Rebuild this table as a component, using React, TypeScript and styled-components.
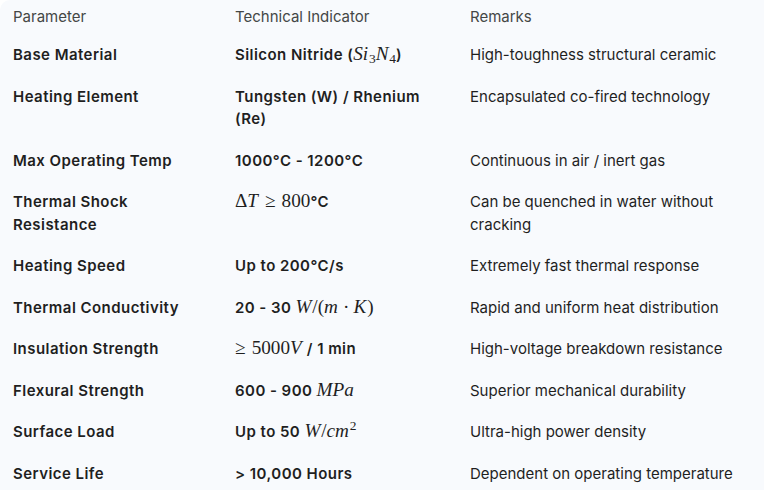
import React from "react";
import styled, { createGlobalStyle } from "styled-components";

const Global = createGlobalStyle`
  html, body { margin: 0; padding: 0; background: #ffffff; overflow: hidden; }
  body { font-family: Inter, "Noto Sans", sans-serif; }
`;

const Wrapper = styled.div`
  background: #f8fafd;
  border-top-left-radius: 10px;
  width: 764px;
  height: 490px;
  box-sizing: border-box;
  padding-left: 13px;
`;

const Grid = styled.div`
  display: grid;
  grid-template-columns: 222px 235px 1fr;
`;

const Cell = styled.div<{ $col: number; $head?: boolean }>`
  box-sizing: border-box;
  padding: ${(p) => (p.$head ? "6px" : "9.5px")} ${(p) => (p.$col === 2 ? "16px" : "40px")}
    ${(p) => (p.$head ? "6px" : "9.5px")} 0;
  font-size: 15px;
  line-height: 22.5px;
  font-weight: ${(p) => (p.$head || p.$col === 2 ? 400 : 600)};
  letter-spacing: ${(p) => (p.$head || p.$col === 2 ? "0" : "0.45px")};
  color: ${(p) => (p.$head ? "#444746" : "#1f1f1f")};
`;

const Math = styled.span`
  font-family: "Liberation Serif", "DejaVu Serif", serif;
  font-size: 1.28em;
  font-weight: 400;
  letter-spacing: 0;
  line-height: 0;
  white-space: nowrap;
`;

const V = styled.i`
  font-style: italic;
  padding-right: 0.04em;
`;

const Rel = styled.span`
  margin: 0 0.32em;
`;

const Bin = styled.span`
  margin: 0 0.22em;
`;

const Sub = styled.span`
  font-size: 0.7em;
  vertical-align: -0.25em;
  font-style: normal;
`;

const Sup = styled.span`
  font-size: 0.7em;
  vertical-align: 0.5em;
  font-style: normal;
`;

type Row = { p: React.ReactNode; t: React.ReactNode; r: React.ReactNode };

const rows: Row[] = [
  {
    p: "Base Material",
    t: (
      <>
        Silicon Nitride (
        <Math>
          <V>Si</V>
          <Sub>3</Sub>
          <V>N</V>
          <Sub>4</Sub>
        </Math>
        )
      </>
    ),
    r: "High-toughness structural ceramic",
  },
  { p: "Heating Element", t: "Tungsten (W) / Rhenium (Re)", r: "Encapsulated co-fired technology" },
  { p: "Max Operating Temp", t: "1000°C - 1200°C", r: "Continuous in air / inert gas" },
  {
    p: "Thermal Shock Resistance",
    t: (
      <>
        <Math>
          Δ<V>T</V>
          <Rel>≥</Rel>800
        </Math>
        °C
      </>
    ),
    r: "Can be quenched in water without cracking",
  },
  { p: "Heating Speed", t: "Up to 200°C/s", r: "Extremely fast thermal response" },
  {
    p: "Thermal Conductivity",
    t: (
      <>
        20 - 30{" "}
        <Math>
          <V>W</V>/(<V>m</V>
          <Bin>·</Bin>
          <V>K</V>)
        </Math>
      </>
    ),
    r: "Rapid and uniform heat distribution",
  },
  {
    p: "Insulation Strength",
    t: (
      <>
        <Math>
          <Rel style={{ marginLeft: 0 }}>≥</Rel>5000<V>V</V>
        </Math>{" "}
        / 1 min
      </>
    ),
    r: "High-voltage breakdown resistance",
  },
  {
    p: "Flexural Strength",
    t: (
      <>
        600 - 900{" "}
        <Math>
          <V>MPa</V>
        </Math>
      </>
    ),
    r: "Superior mechanical durability",
  },
  {
    p: "Surface Load",
    t: (
      <>
        Up to 50{" "}
        <Math>
          <V>W</V>/<V>cm</V>
          <Sup>2</Sup>
        </Math>
      </>
    ),
    r: "Ultra-high power density",
  },
  { p: "Service Life", t: "> 10,000 Hours", r: "Dependent on operating temperature" },
];

export default function App() {
  return (
    <Wrapper>
      <Global />
      <Grid>
        <Cell $col={0} $head>Parameter</Cell>
        <Cell $col={1} $head>Technical Indicator</Cell>
        <Cell $col={2} $head>Remarks</Cell>
        {rows.map((row, i) => (
          <React.Fragment key={i}>
            <Cell $col={0}>{row.p}</Cell>
            <Cell $col={1}>{row.t}</Cell>
            <Cell $col={2}>{row.r}</Cell>
          </React.Fragment>
        ))}
      </Grid>
    </Wrapper>
  );
}
